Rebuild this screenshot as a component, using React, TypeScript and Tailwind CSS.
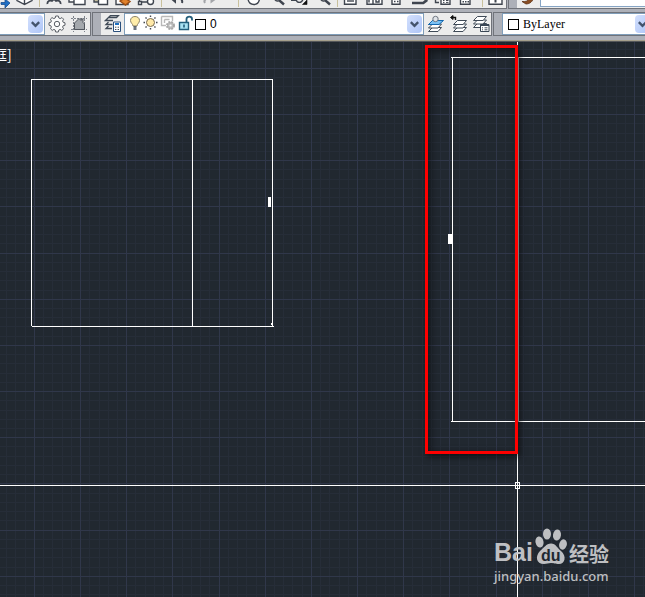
import { ReactNode } from 'react'

interface ToolProps {
    label: string
    className?: string
    children: ReactNode
}

// Grid spacing of the drawing area: 5 minor cells in a major one
const MAJOR = 46.17
const MINOR = MAJOR / 5
const COLUMNS = 220
const ROWS = 130

const StandardTool = ({ label, className = 'w-[23px]', children }: ToolProps) => (
    <button type="button" aria-label={label} className={`h-2 shrink-0 overflow-hidden ${className}`}>
        <svg width={23} height={8} viewBox="0 0 23 8" fill="none" stroke="#3f454f" strokeWidth={1.4}>
            {children}
        </svg>
    </button>
)

const LayerTool = ({ label, className = 'w-6', children }: ToolProps) => (
    <button type="button" aria-label={label} className={`flex h-[22px] shrink-0 items-center justify-center ${className}`}>
        <svg width={18} height={18} viewBox="0 0 18 18" fill="none" stroke="#3f4a57">
            {children}
        </svg>
    </button>
)

const Separator = () => (
    <div className="flex w-[7px] shrink-0 justify-center">
        <div className="h-[7px] w-px bg-[#c9c19c]" />
    </div>
)

const Grip = () => <div className="w-2 shrink-0 self-stretch bg-[#adb0b8]" />

const DropArrow = () => (
    <div className="pointer-events-none absolute inset-y-px right-px flex w-[15px] items-center justify-center rounded-sm bg-linear-to-br from-[#d3e0fd] to-[#aec5f7]">
        <svg width={9} height={7} viewBox="0 0 9 7" fill="none" stroke="#44546c" strokeWidth={2.4}>
            <path d="M0.8 1.2L4.5 4.9L8.2 1.2" />
        </svg>
    </div>
)

const Swatch = () => <span className="h-[11px] w-[11px] shrink-0 border border-black bg-white" />

// Stack of paper sheets seen from the side, drawn from the bottom up
const Sheets = () => (
    <g fill="#fff">
        <path d="M5.5 8.5H14.5L11 12.5H1.5Z" />
        <path d="M5.5 5H14.5L11 9H1.5Z" />
        <path d="M5.5 1.5H14.5L11 5.5H1.5Z" />
    </g>
)

const StandardToolbar = () => (
    <div className="flex h-[9px] overflow-hidden">
        <div className="-ml-2.5 flex shrink-0 border-r border-b border-[#70737a] bg-[#ececec]">
            <StandardTool label="Export">
                <path d="M9 4.5H12" stroke="#fff" />
                <path d="M11 2.5H15V-1L20 3L15 8V4.5H11Z" fill="#1f6fc4" stroke="#1c4f8f" strokeWidth={0.8} />
            </StandardTool>
            <StandardTool label="3D">
                <path d="M4 -1V0.5L11.5 4.5L19 0.5V-1M11.5 -1V4.5" fill="#fff" />
            </StandardTool>
            <Separator />
            <StandardTool label="Cut">
                <path d="M4.5 4C4 1 7 0 9 1L12 -2M17.5 4C18 1 15 0 13 1L10 -2" strokeWidth={1.8} />
            </StandardTool>
            <StandardTool label="Copy">
                <path d="M3 -3H13V2H3Z" fill="#fff" />
                <path d="M8 -1H19V4.5H8Z" fill="#fff" />
            </StandardTool>
            <StandardTool label="Paste">
                <path d="M5 -3H15V2H5Z" fill="#c3bd9c" />
                <path d="M9.5 -1H18.5V4.5H9.5Z" fill="#fff" />
            </StandardTool>
            <StandardTool label="Match properties">
                <path d="M4 -1H16V4.5H4Z" fill="#fff" />
                <path d="M8 1L13 -2L18 1.5L13.5 5Z" fill="#e0812c" stroke="#9a4e15" />
            </StandardTool>
            <StandardTool label="Block editor">
                <path d="M4.5 0V3H7M7 2H14" />
                <path d="M3.5 1.5H6.5V4.5H3.5Z" fill="#fff" />
                <circle cx={15.5} cy={1.5} r={3} fill="#fff" />
            </StandardTool>
            <Separator />
            <StandardTool label="Undo" className="w-[35px]">
                <path d="M7 -1L10 1.5V-1M16 -1C17 0 17.5 1.5 17 3" strokeWidth={2} />
            </StandardTool>
            <StandardTool label="Redo" className="w-[35px]">
                <path d="M5 3C4 1.5 4.5 0 6 -1M11.5 -1V1.5L15 -1" stroke="#a3a5a9" strokeWidth={2} />
            </StandardTool>
            <Separator />
            <StandardTool label="Pan">
                <path d="M6 -1C6.5 2 8.5 4.5 12 4.5S17 2 17.5 -1" fill="#fff" />
            </StandardTool>
            <StandardTool label="Zoom realtime">
                <path d="M9.5 -1C11 1.5 13.5 1.5 15 0" />
                <path d="M14.5 0.5L19 4.5" strokeWidth={2.4} />
            </StandardTool>
            <StandardTool label="Zoom window">
                <path d="M3 0H8" strokeWidth={2} />
                <path d="M8 -1C8.5 3.5 14 3.5 15 -1" />
                <path d="M19 0V4.5H14.5Z" fill="#111" stroke="#111" strokeWidth={0.6} />
            </StandardTool>
            <StandardTool label="Zoom previous">
                <path d="M9.5 -1C11 1.5 13.5 1.5 15 0" />
                <path d="M14.5 0.5L19 4.5" strokeWidth={2.4} />
            </StandardTool>
            <Separator />
            <StandardTool label="Properties">
                <path d="M3.5 -2H15V4.3H3.5Z" fill="#fff" />
                <path d="M6 1H13" />
            </StandardTool>
            <StandardTool label="Design center">
                <path d="M3 -2H18V4.3H3ZM9 -2V4.3" fill="#fff" />
                <path d="M5 0V2.5M12 -1H15V2H12Z" />
            </StandardTool>
            <StandardTool label="Tool palettes">
                <path d="M5 -2H13V4.3H5Z" fill="#fff" />
                <path d="M7 1.5H8.5M10 1.5H11.5" />
            </StandardTool>
            <StandardTool label="Sheet set manager">
                <path d="M2 2.5H13L17 -1V1L13.5 3.5H2" />
            </StandardTool>
            <StandardTool label="Markup set manager">
                <path d="M2.5 -1V2.5H6" />
                <path d="M8 -1.5H17V4.3H8Z" fill="#fff" />
                <path d="M10 0.5H11.5M13 0.5H15.5M10 2.4H11.5M13 2.4H15.5" strokeWidth={1} />
            </StandardTool>
            <StandardTool label="Calculator">
                <path d="M4.5 -2H14V4.3H4.5Z" fill="#fff" />
                <path d="M6.5 1.8H8M9 1.8H10.5M11.5 1.8H13" />
            </StandardTool>
            <Separator />
            <StandardTool label="Help" className="w-5">
                <path d="M3 -2H16V4.3H3Z" fill="#fff" />
                <path d="M9.5 -1V2.5" strokeWidth={2} />
            </StandardTool>
        </div>
        <div className="ml-px flex flex-1 border-b border-l border-[#70737a] bg-[#ececec]">
            <Grip />
            <StandardTool label="Text style">
                <path d="M5 1.5L9 4C13 4 16 1 16.5 -2H12C11 1 9 2 5 1.5Z" fill="#8a4d22" stroke="#5d3216" strokeWidth={0.8} />
            </StandardTool>
            <div className="h-[7px] flex-1 border-b border-l border-[#86a4c4] bg-white" />
        </div>
    </div>
)

const LayerToolbar = () => (
    <div className="flex h-6 overflow-hidden">
        <div className="flex w-[91px] shrink-0 border-y border-r border-[#70737a] bg-[#ececec]">
            <div className="relative w-[45px] border border-l-0 border-[#7f9db9] bg-white">
                <select aria-label="Workspace" className="h-full w-full appearance-none outline-none" />
                <DropArrow />
            </div>
            <LayerTool label="Workspace settings" className="w-[23px]">
                <path
                    d="M7.7 1H10.3L10.8 3L12.2 3.6L14 2.6L15.6 4.2L14.6 6L15.2 7.3L17 7.8V10.2L15.2 10.7L14.6 12L15.6 13.8L13.8 15.4L12.1 14.4L10.8 15L10.3 17H7.7L7.2 15L5.9 14.4L4.2 15.4L2.5 13.8L3.4 12L2.8 10.7L1 10.2V7.8L2.8 7.3L3.4 6L2.4 4.2L4 2.6L5.8 3.6L7.2 3Z"
                    fill="#fafafa"
                    stroke="#5a5f66"
                />
                <circle cx={9} cy={9} r={2.7} stroke="#5a5f66" />
            </LayerTool>
            <LayerTool label="My workspace" className="w-[22px]">
                <path d="M3.5 1V17M14.5 1V17M1 3.5H17M1 14.5H17" stroke="#7d828a" strokeDasharray="2 1" />
                <path d="M4.5 14.5V8L9 3.5L11 5.5V4H13V7.5L14.5 9V14.5Z" fill="#a4a8ad" stroke="#50555d" />
            </LayerTool>
        </div>

        <div className="ml-px flex shrink-0 border border-[#70737a] bg-[#ececec]">
            <Grip />
            <LayerTool label="Layer properties manager" className="w-[23px]">
                <path d="M5 2.5H12.5L14.5 0.5H6.5L1.5 5.5H9M4.5 7L2 9.5H8.5M4.5 11L2 13.5H8" strokeWidth={1.3} />
                <path d="M9.5 7H16.5V16.5H9.5Z" fill="#fff" stroke="#2a4f7c" />
                <path d="M11 9H15" stroke="#1d6fc0" strokeWidth={2} />
                <path d="M11 12.2H12.4M13.6 12.2H15M11 14.5H12.4M13.6 14.5H15" />
            </LayerTool>
            <div className="relative flex w-[300px] items-center border border-[#7f9db9] bg-white pl-1">
                <svg className="shrink-0" width={64} height={18} viewBox="0 0 64 18" fill="none">
                    <path d="M4 11C4 9 1.5 8 1.5 5.5C1.5 3 3.5 1.5 6 1.5S10.5 3 10.5 5.5C10.5 8 8 9 8 11Z" fill="#ffedaa" stroke="#8c8368" />
                    <path d="M4.5 12H7.5M4.5 14H7.5" stroke="#3e4858" strokeWidth={1.6} />
                    <circle cx={21.5} cy={7.5} r={4} fill="#ffe9a8" stroke="#786a50" />
                    <path d="M21.5 0.5V2M21.5 13V14.5M14.5 7.5H16M27 7.5H28.5M16.5 2.5L17.6 3.6M25.4 11.4L26.5 12.5M26.5 2.5L25.4 3.6M17.6 11.4L16.5 12.5" stroke="#454a52" strokeWidth={1.4} />
                    <path d="M32.5 1.5H43.5V6M32.5 1.5V10.5H37M35.5 4.5V8M35.5 4.5H40.5" stroke="#b8b8b8" strokeWidth={1.4} />
                    <circle cx={41.5} cy={10.5} r={3.5} fill="#bdbdbd" stroke="#a8a8a8" strokeWidth={2} strokeDasharray="1.8 1" />
                    <circle cx={41.5} cy={10.5} r={1.1} fill="#fff" />
                    <path d="M50.5 7.5H59.5V14.5H50.5Z" fill="#a9e2f3" stroke="#235d7b" strokeWidth={1.4} />
                    <path d="M57.5 7V4C57.5 0.8 63 0.8 63 4V5.5" stroke="#235d7b" strokeWidth={1.8} />
                    <path d="M55 9.5V12.5" stroke="#235d7b" strokeWidth={1.6} />
                </svg>
                <div className="ml-0.5 flex flex-1 items-center">
                    <Swatch />
                    <select aria-label="Layer" className="ml-1 flex-1 appearance-none font-['Liberation_Sans',sans-serif] text-xs text-black outline-none">
                        <option>0</option>
                    </select>
                </div>
                <DropArrow />
            </div>
            <LayerTool label="Make object's layer current">
                <g transform="translate(0 4)">
                    <Sheets />
                </g>
                <path d="M5.5 5.5H16.5L12 9.5H1.5Z" fill="#7cc2f5" stroke="#1469b1" />
                <circle cx={8.5} cy={4} r={2.7} fill="#dfe3e8" stroke="#6e7580" />
            </LayerTool>
            <LayerTool label="Layer previous" className="w-[22px]">
                <g transform="translate(2 4)">
                    <Sheets />
                </g>
                <path d="M0.5 2.5L3 0.5V4.5Z" fill="#111" stroke="#111" />
                <path d="M2 2.5H5.5V5" stroke="#111" strokeWidth={1.4} />
            </LayerTool>
            <LayerTool label="Layer states manager" className="w-[21px]">
                <Sheets />
                <path d="M8.5 9.5H17V16.5H8.5Z" fill="#fff" stroke="#394655" />
                <path d="M8.5 10H17" stroke="#394655" strokeWidth={2} />
                <path d="M10 12.8H11M12.5 12.8H15.5M10 14.8H11M12.5 14.8H15.5" />
            </LayerTool>
        </div>

        <div className="ml-px flex flex-1 border border-r-0 border-[#70737a] bg-[#ececec]">
            <Grip />
            <div className="relative flex w-[150px] shrink-0 items-center border border-[#7f9db9] bg-white pl-[5px]">
                <Swatch />
                <select aria-label="Color" className="ml-1 flex-1 appearance-none font-['Liberation_Serif',serif] text-xs text-black outline-none">
                    <option>ByLayer</option>
                </select>
                <DropArrow />
            </div>
        </div>
    </div>
)

const Grid = () => (
    <g shapeRendering="crispEdges">
        {Array.from({ length: COLUMNS }, (_, i) => (
            <rect key={i} x={Math.floor(34.4 + (i - 3) * MINOR)} width={1} height="100%" fill="#262d38" />
        ))}
        {Array.from({ length: ROWS }, (_, i) => (
            <rect key={i} y={Math.floor(26.4 + (i - 2) * MINOR)} width="100%" height={1} fill="#262d38" />
        ))}
        {Array.from({ length: COLUMNS / 5 }, (_, i) => (
            <rect key={i} x={Math.floor(34.4 + i * MAJOR)} width={1} height="100%" fill="#30374a" />
        ))}
        {Array.from({ length: ROWS / 5 }, (_, i) => (
            <rect key={i} y={Math.floor(26.4 + i * MAJOR)} width="100%" height={1} fill="#30374a" />
        ))}
    </g>
)

const Watermark = () => (
    <div className="absolute top-[482px] left-[494px] text-[#cfd0d2] opacity-90">
        <div className="flex h-10 items-end gap-0.5">
            <span className="font-['Liberation_Sans',sans-serif] text-[25px] leading-6 font-bold">Bai</span>
            <svg width={32} height={36} viewBox="0 0 32 36" className="shrink-0" fill="currentColor">
                <ellipse cx={4.5} cy={14} rx={4} ry={5.5} transform="rotate(-12 4.5 14)" />
                <ellipse cx={12} cy={6} rx={4} ry={5.5} />
                <ellipse cx={22} cy={7} rx={4} ry={5.5} transform="rotate(8 22 7)" />
                <ellipse cx={28} cy={16.5} rx={3.8} ry={5.2} transform="rotate(15 28 16.5)" />
                <path d="M16 15.5C21 15.5 22 20 26 23C32 28 30 36 24 36C20 36 19 35 16 35S12 36 9 36C1 36 0 28 5 23C9 20 11 15.5 16 15.5Z" />
                <text x={6} y={33} fontSize={16} fontWeight={700} fontFamily="Liberation Sans, sans-serif" fill="#222831">
                    du
                </text>
            </svg>
            <span className="font-['Noto_Sans_CJK_SC',sans-serif] text-xl leading-5 font-bold">经验</span>
        </div>
        <p className="mt-1 font-['Noto_Sans',sans-serif] text-[13px] leading-4 font-medium">jingyan.baidu.com</p>
    </div>
)

const DrawingArea = () => (
    <main className="relative flex-1 overflow-hidden bg-[#212830]">
        <svg className="absolute inset-0 h-full w-full">
            <Grid />
            <g fill="#fff" shapeRendering="crispEdges">
                {/* left view */}
                <rect x={31} y={37} width={241} height={1} />
                <rect x={32} y={284} width={242} height={1} />
                <rect x={31} y={37} width={1} height={247} />
                <rect x={192} y={37} width={1} height={247} />
                <rect x={272} y={37} width={1} height={248} />
                <rect x={271} y={281} width={1} height={2} />
                <rect x={268} y={155} width={3} height={10} />
                {/* right view */}
                <rect x={451} y={15} width="100%" height={1} />
                <rect x={451} y={379} width="100%" height={1} />
                <rect x={452} y={15} width={1} height={365} />
                <rect x={518} y={15} width={1} height={365} fill="#c4c4c4" />
                <rect x={448} y={192} width={4} height={10} />
                {/* crosshair */}
                <rect x={517} y={0} width={1} height="100%" />
                <rect x={0} y={443} width="100%" height={1} />
                <rect x={515.5} y={440.5} width={4} height={6} fill="none" stroke="#fff" />
            </g>
        </svg>
        <p className="absolute top-1 -left-[7px] font-['Noto_Sans_CJK_SC',sans-serif] text-sm leading-4 text-white">框]</p>
        <div className="absolute top-[3px] left-[425px] h-[409px] w-[93px] border-3 border-[#fe0000] shadow-[2px_3px_6px_rgba(0,0,0,0.55),inset_2px_3px_8px_rgba(0,0,0,0.55)]" />
        <Watermark />
    </main>
)

const App = () => (
    <div className="flex min-h-screen flex-col overflow-hidden bg-[#adb0b8]">
        <header>
            <StandardToolbar />
            <div className="h-[3px]" />
            <LayerToolbar />
            <div className="mt-1 h-px bg-[#a59f8c]" />
            <div className="h-px bg-[#55575a]" />
        </header>
        <DrawingArea />
    </div>
)

export default App
